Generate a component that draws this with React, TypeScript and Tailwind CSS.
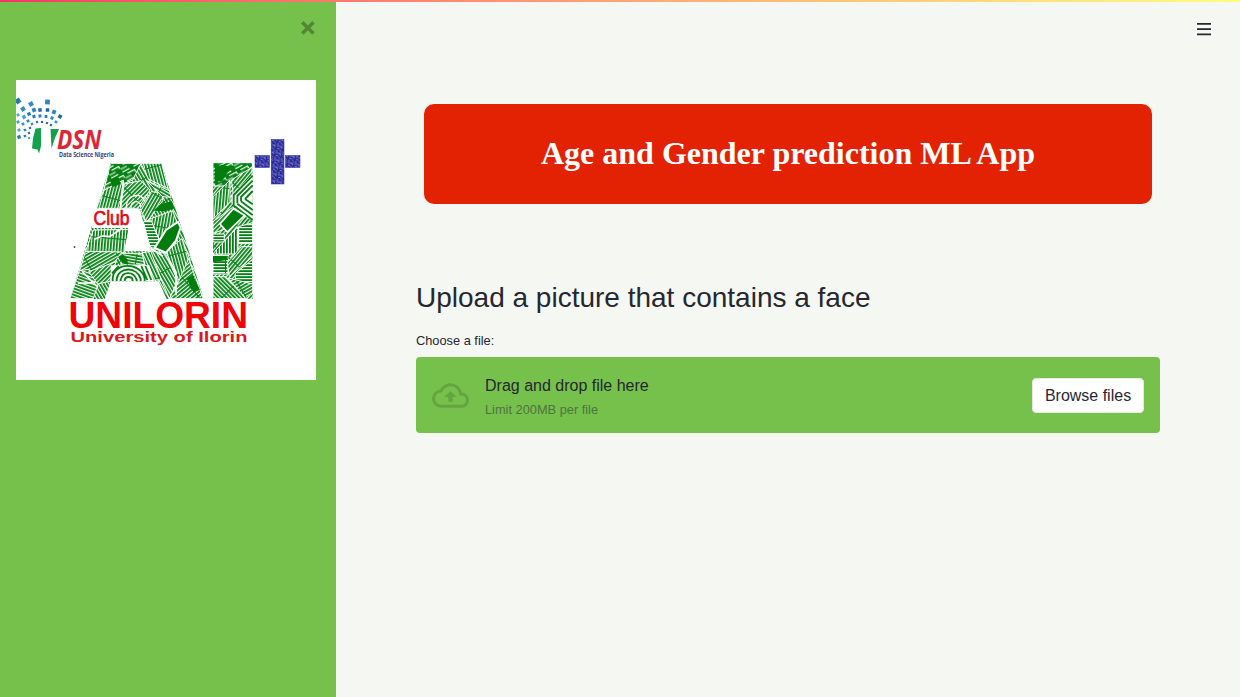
import React from "react";

type Patch = { points: string; fill: string };

/* Patches of the circuit lettering, on a 900-unit canvas. */
const letterA: Patch[] = [
  { points: "284,250 375,250 350,300 262,335", fill: "url(#chip)" },
  { points: "375,250 437,250 456,325 398,298", fill: "url(#s75)" },
  { points: "262,332 322,300 312,385 242,385", fill: "url(#s105)" },
  { points: "325,312 375,302 402,330 365,385 312,385", fill: "url(#s135)" },
  { points: "372,385 405,335 438,338 440,362 392,428", fill: "url(#s120)" },
  { points: "392,302 460,332 466,352 440,350", fill: "url(#s30)" },
  { points: "398,418 470,392 488,440 430,478 412,440", fill: "url(#s100)" },
  { points: "382,425 405,420 430,482 412,505 402,500", fill: "url(#s0)" },
  { points: "232,450 340,448 325,518 208,516", fill: "url(#s95)" },
  { points: "208,514 318,516 270,582 190,575", fill: "url(#s150)" },
  { points: "318,520 380,520 385,555 315,555", fill: "url(#s10)" },
  { points: "378,518 408,514 436,600 398,600", fill: "url(#s65)" },
  { points: "190,572 218,568 250,600 232,656 162,656", fill: "url(#s20)" },
  { points: "218,575 300,545 282,604 245,612", fill: "url(#s135)" },
  { points: "404,512 448,520 485,602 460,656 436,600", fill: "url(#s60)" },
  { points: "450,515 498,476 522,540 520,610 488,600", fill: "url(#s75)" },
  { points: "518,535 532,575 562,656 460,656 488,604", fill: "url(#s140)" },
];

const letterI: Patch[] = [
  { points: "591,248 710,248 708,268 625,318 591,318", fill: "url(#chip)" },
  { points: "591,350 642,300 642,365 591,418", fill: "url(#s95)" },
  { points: "646,300 708,262 708,285 652,345", fill: "url(#s130)" },
  { points: "591,425 650,382 690,405 620,450 591,460", fill: "url(#s135)" },
  { points: "668,440 710,428 710,490 668,490", fill: "url(#s0)" },
  { points: "591,462 625,462 625,486 591,486", fill: "url(#s0)" },
  { points: "602,508 666,440 666,522 591,522", fill: "url(#s90)" },
  { points: "591,526 636,526 636,582 591,582", fill: "url(#s0)" },
  { points: "634,548 676,500 710,500 710,530 640,590", fill: "url(#s130)" },
  { points: "658,580 710,538 710,612 658,612", fill: "url(#s0)" },
  { points: "591,590 630,590 690,656 591,656", fill: "url(#s45)" },
  { points: "636,594 710,612 710,640 690,656", fill: "url(#s150)" },
];

const stripes: [string, number][] = [
  ["s0", 0], ["s10", 10], ["s20", 20], ["s30", 30], ["s45", 45], ["s60", 60],
  ["s65", 65], ["s75", 75], ["s90", 90], ["s95", 95], ["s100", 100], ["s105", 105],
  ["s120", 120], ["s130", 130], ["s135", 135], ["s140", 140], ["s150", 150],
];

/* x, y, size, rotation, colour */
const squares: [number, number, number, number, string][] = [
  [18, 101, 5, -35, "#2478ad"], [31, 104, 4.5, -30, "#388cbd"], [47.5, 102, 4.8, 2, "#3188c0"],
  [23, 109, 4.2, -35, "#358bbd"], [34, 110, 3.8, -20, "#2984ca"], [40, 110, 3.5, -8, "#2a65b0"],
  [47.5, 110, 3.5, 0, "#2465aa"], [54, 112, 3.8, 20, "#2b86bc"], [60, 116.5, 3.7, 30, "#2368ab"],
  [18, 115, 2.8, -35, "#5ba7cf"], [24, 117, 3.5, -30, "#4aa2d0"], [29, 114, 3.4, -25, "#2477bd"],
  [34, 116.5, 3, -20, "#2679b6"], [40, 116, 3, -10, "#337db9"], [46, 116.5, 2.8, 0, "#2677bb"],
  [52, 118, 3, 20, "#3187c5"], [56, 122, 2.7, 30, "#398bc6"], [18, 122, 2.8, -35, "#429dcd"],
  [23, 124, 2.7, -30, "#2a91c3"], [28, 121, 2.7, -25, "#238bc5"], [32, 124, 2.3, -20, "#3288bd"],
  [37, 122, 2.2, -10, "#3277af"], [42, 122, 2.1, 0, "#2b5f9b"], [47, 123, 2.1, 20, "#2664a4"],
  [51, 125, 2.1, 30, "#315d9b"], [19, 130, 3, -35, "#59a7ce"], [25, 130, 2.5, -20, "#3184b5"],
  [30, 128, 2.2, -20, "#2678b1"], [19, 137, 3.4, -20, "#2a7faf"], [25, 136, 2.5, -20, "#2688bb"],
  [29, 133, 2.2, -20, "#376ca6"], [29, 138, 2, -20, "#4a8eae"],
];

function Patches({ items }: { items: Patch[] }) {
  return (
    <g stroke="white" strokeWidth="3">
      {items.map((p, i) => (
        <polygon key={i} points={p.points} fill={p.fill} />
      ))}
    </g>
  );
}

function CircuitLetters() {
  return (
    <g transform="translate(16 80) scale(0.333333)">
      <g clipPath="url(#outlineA)">
        <path d="M160 245h410v415H160z" fill="url(#s60)" />
        <Patches items={letterA} />
        <path d="M282 300l26-8 6 20-24 10zM412 392l22-20 34-8 6 22-28 8zM306 532l14-10 14 16 2 16-16-4zM512 596l18-12 22 46-20 6z" fill="#007d0c" />
        <path d="M416 504l34-54 36-24 8 16-14 40-30 36z" fill="#007d0c" stroke="white" strokeWidth="6" />
        <path d="M284 604v-48h116l14 48z" fill="white" />
        <path d="M290 603v-8c4-50 84-50 96 0v8M302 603v-6c6-38 62-38 72 0v6M314 603v-4c6-26 38-26 48 0v4M326 603c0-16 24-16 24 0M288 580l20-22M394 600l-18-42M406 600l-18-42" stroke="#078016" strokeWidth="5.5" fill="none" />
        <path d="M345 385c-4-24 30-28 30-4M332 385c-6-44 48-50 54-20" stroke="white" strokeWidth="4" fill="none" />
        <path d="M235 478l24-10 22 2 38-26M198 574l48 48M186 610l52-2M456 536l24 40v70M322 305l-8 76M405 505l36 24" stroke="white" strokeWidth="5" fill="none" />
      </g>
      <path d="M228 387h145v6l32 121h-80l13-70H228z" fill="white" />

      <path d="M591 248h119v408H591z" fill="url(#s130)" />
      <Patches items={letterI} />
      <path d="M597 262l22-8 26 8-26 40-22 4z" fill="#007d0c" />
      <path d="M646 345l64-62v140l-26-16-38-38z" fill="white" />
      <path d="M653 375v-30l57-58M664 370v-22l46-46M652 376l58 44M664 371l46 34M675 364v-13l35-35M675 364l35 26M687 357l23-24M687 357l23 16" stroke="#078016" strokeWidth="5.5" fill="none" />
      <path d="M612 432l40-46 34 20-52 50z" fill="#007d0c" stroke="white" strokeWidth="5" />
      <path d="M591 528h44v12l-44 6z" fill="#007d0c" />
    </g>
  );
}

function ClubLogo() {
  return (
    <svg className="block size-[300px] bg-white" viewBox="16 80 300 300" role="img">
      <defs>
        {stripes.map(([id, angle]) => (
          <pattern key={id} id={id} width="90" height="9" patternUnits="userSpaceOnUse" patternTransform={`rotate(${angle})`}>
            <rect width="90" height="9" fill="#058014" />
            <rect width="87" height="3.6" fill="#f3fff3" />
          </pattern>
        ))}
        <pattern id="chip" width="38" height="30" patternUnits="userSpaceOnUse" patternTransform="rotate(-28)">
          <rect width="38" height="30" fill="#058014" />
          <path d="M0 4h24M12 14h24v8M0 24h20" stroke="#eaffea" strokeWidth="3.5" fill="none" />
        </pattern>
        <pattern id="blueChip" width="7" height="7" patternUnits="userSpaceOnUse" patternTransform="rotate(12)">
          <rect width="7" height="7" fill="#282898" />
          <path d="M0 1h4l2 2M1 3.5h2l3 3M0 6h2M5 0v2" stroke="#a9a9e4" strokeWidth="0.65" fill="none" />
        </pattern>
        <clipPath id="outlineA">
          <path d="M284 249h152l127 408H452l-24-53H284l-18 53H163z" />
        </clipPath>
      </defs>

      {squares.map(([x, y, s, r, c], i) => (
        <rect key={i} x={x - s / 2} y={y - s / 2} width={s} height={s} fill={c} transform={`rotate(${r} ${x} ${y})`} />
      ))}
      <path d="M35.500 128.500l5.500-.5v18l-2 7.500-1.500-4-5.500-1 1-10z" fill="#12a04c" />
      <path d="M50.500 129h8.500l-4 9-3.500 10.500z" fill="#12a04c" />
      <text x="57" y="149.2" textLength="44.5" lengthAdjust="spacingAndGlyphs" fontFamily="Open Sans, sans-serif" fontSize="27.5" fontWeight="700" fontStyle="italic" fill="#dc2638">DSN</text>
      <text x="59" y="157" textLength="55" lengthAdjust="spacingAndGlyphs" fontFamily="Open Sans, sans-serif" fontSize="7.6" fontWeight="700" fill="#34417f">Data Science Nigeria</text>

      <CircuitLetters />
      <circle cx="74.5" cy="247" r="0.9" fill="#444" />

      <g fill="url(#blueChip)" stroke="#27279b" strokeWidth="0.5">
        <rect x="271.2" y="139.5" width="12.8" height="44.5" />
        <rect x="255" y="155.500" width="14.5" height="12" />
        <rect x="285.5" y="155.500" width="14.5" height="12" />
      </g>

      <text x="93.5" y="225.2" textLength="36" lengthAdjust="spacingAndGlyphs" fontFamily="Liberation Sans, sans-serif" fontSize="19.5" fill="#e00b18" stroke="#e00b18" strokeWidth="0.7">Club</text>
      <text x="68.500" y="327.5" textLength="179.5" lengthAdjust="spacingAndGlyphs" fontFamily="Liberation Sans, sans-serif" fontSize="37" fontWeight="700" fill="#ee0509">UNILORIN</text>
      <text x="70.5" y="342.3" textLength="177" lengthAdjust="spacingAndGlyphs" fontFamily="Liberation Sans, sans-serif" fontSize="15.5" fontWeight="700" fill="#d71920">University of Ilorin</text>
    </svg>
  );
}

export default function App() {
  return (
    <div className="flex h-[697px] w-[1240px] flex-col overflow-hidden bg-[#f4f7f2] font-['Liberation_Sans',Arial,sans-serif] text-[#262730]">
      <div className="h-0.5 shrink-0 bg-linear-to-r from-[#f63366] to-[#fffd80]" />
      <div className="flex min-h-0 flex-1">
        <aside className="w-[336px] shrink-0 bg-[#76c14b] px-4">
          <div className="flex h-[78px] justify-end pt-[19px]">
            <button className="mr-[5px] size-3.5 text-[#528736]" aria-label="Close">
              <svg className="block size-3.5" viewBox="0 0 8 8" fill="currentColor">
                <path d="M1.41 0l-1.41 1.41.72.72 1.78 1.81-1.78 1.78-.72.69 1.41 1.44.72-.72 1.81-1.81 1.78 1.81.69.72 1.44-1.44-.72-.69-1.81-1.78 1.81-1.81.72-.72-1.44-1.41-.69.72-1.78 1.78-1.81-1.78-.72-.72z" />
              </svg>
            </button>
          </div>
          <ClubLogo />
        </aside>

        <main className="flex-1">
          <header className="flex h-[102px] justify-end pt-[20.5px] pr-[29px]">
            <button className="size-3.5" aria-label="Menu">
              <svg className="block size-3.5" viewBox="0 0 8 8" fill="currentColor">
                <path d="M0 0v1h8v-1h-8zm0 2.97v1h8v-1h-8zm0 3v1h8v-1h-8z" />
              </svg>
            </button>
          </header>
          <div className="mx-20">
            <div className="mx-2 flex h-[100px] items-center justify-center rounded-[10px] bg-[#e32204] pb-0.5">
              <h1 className="font-['Liberation_Serif',serif] text-[32px] leading-[38px] font-bold whitespace-nowrap text-white">
                Age and Gender prediction ML App
              </h1>
            </div>
            <h2 className="mt-[77px] text-[28px] leading-[34px] whitespace-nowrap">Upload a picture that contains a face</h2>
            <p className="mt-[17px] text-[12.8px] leading-[18px]">Choose a file:</p>
            <section className="mt-[7px] flex h-[76px] items-center rounded-[4px] bg-[#76c14b] px-4">
              <svg className="size-[37px] shrink-0 text-[#65a541]" viewBox="0 0 24 24" fill="currentColor">
                <path d="M19.35 10.04A7.49 7.49 0 0 0 12 4C9.11 4 6.6 5.64 5.35 8.04A5.994 5.994 0 0 0 0 14c0 3.31 2.69 6 6 6h13c2.76 0 5-2.24 5-5 0-2.64-2.05-4.78-4.65-4.96zM19 18H6c-2.21 0-4-1.79-4-4 0-2.05 1.53-3.76 3.56-3.97l1.07-.11.5-.95A5.469 5.469 0 0 1 12 6c2.62 0 4.88 1.86 5.39 4.43l.3 1.5 1.53.11A2.98 2.98 0 0 1 22 15c0 1.65-1.35 3-3 3zM8 13h2.55v3h2.9v-3H16l-4-4z" />
              </svg>
              <div className="ml-4 flex flex-1 flex-col self-start pt-4">
                <span className="text-base leading-[26px]">Drag and drop file here</span>
                <span className="mt-px text-[12.8px] leading-[20px] text-[#4e743e]">Limit 200MB per file</span>
              </div>
              <button className="h-[35px] w-28 rounded-[4px] border border-[#e6eae4] bg-white pt-px text-base leading-[32px] whitespace-nowrap">
                Browse files
              </button>
            </section>
          </div>
        </main>
      </div>
    </div>
  );
}
